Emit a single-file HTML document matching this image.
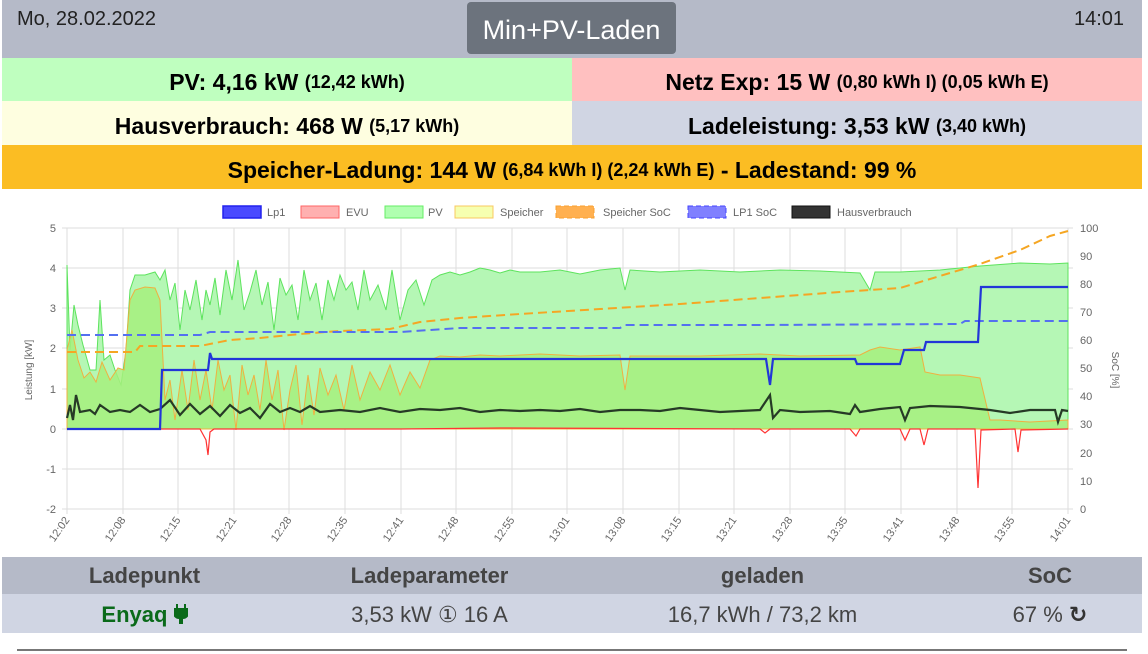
<!DOCTYPE html>
<html><head><meta charset="utf-8"><style>
*{margin:0;padding:0;box-sizing:border-box}
body{width:1148px;height:654px;background:#fff;font-family:"Liberation Sans","DejaVu Sans",sans-serif;position:relative;overflow:hidden}
.abs{position:absolute}
.hdr{left:2px;top:0;width:1140px;height:58px;background:#b5bac8}
.row{position:absolute;display:flex;align-items:center;justify-content:center;font-weight:bold;font-size:23px;color:#000;padding-top:6px}
.row small{font-size:18px}
</style></head><body>
<div class="abs hdr"></div>
<div class="abs" style="left:17px;top:8px;font-size:20px;color:#222">Mo, 28.02.2022</div>
<div class="abs" style="left:1074px;top:8px;font-size:20px;color:#222">14:01</div>
<div class="abs" style="left:467px;top:2px;width:209px;height:52px;background:#6c737d;border-radius:4px;color:#fff;font-size:27px;display:flex;align-items:center;justify-content:center;padding-top:4px">Min+PV-Laden</div>
<div class="row" style="left:2px;top:58px;width:570px;height:43px;background:#bfffbf">PV: 4,16 kW&nbsp;<small>(12,42 kWh)</small></div>
<div class="row" style="left:572px;top:58px;width:570px;height:43px;background:#ffc0c0">Netz Exp: 15 W&nbsp;<small>(0,80 kWh I) (0,05 kWh E)</small></div>
<div class="row" style="left:2px;top:101px;width:570px;height:44px;background:#fefee0">Hausverbrauch: 468 W&nbsp;<small>(5,17 kWh)</small></div>
<div class="row" style="left:572px;top:101px;width:570px;height:44px;background:#d0d5e3">Ladeleistung: 3,53 kW&nbsp;<small>(3,40 kWh)</small></div>
<div class="row" style="left:2px;top:145px;width:1140px;height:44px;background:#fbbd23">Speicher-Ladung: 144 W&nbsp;<small>(6,84 kWh I) (2,24 kWh E)</small>&nbsp;- Ladestand: 99 %</div>

<svg class="abs" style="left:0;top:189px" width="1148" height="366" viewBox="0 189 1148 366" font-family="Liberation Sans, sans-serif">
<g font-size="11" fill="#666">
<rect x="223" y="206" width="38" height="12" fill="#4a4aff" stroke="#22e" stroke-width="1.5"/><text x="267" y="216">Lp1</text>
<rect x="301" y="206" width="38" height="12" fill="#ffb0b0" stroke="#f66"/><text x="346" y="216">EVU</text>
<rect x="385" y="206" width="38" height="12" fill="#b0ffb0" stroke="#6e6"/><text x="428" y="216">PV</text>
<rect x="455" y="206" width="38" height="12" fill="#f6ffb0" stroke="#f8c860"/><text x="500" y="216">Speicher</text>
<rect x="556" y="206" width="38" height="12" fill="#ffb050" stroke="#f8a030" stroke-dasharray="5 3"/><text x="603" y="216">Speicher SoC</text>
<rect x="688" y="206" width="38" height="12" fill="#8080ff" stroke="#44f" stroke-dasharray="5 3"/><text x="733" y="216">LP1 SoC</text>
<rect x="792" y="206" width="38" height="12" fill="#333" stroke="#111"/><text x="837" y="216">Hausverbrauch</text>
</g>
<g stroke="#ddd" stroke-width="1">
<path d="M62 228H1073M62 268H1073M62 308H1073M62 348H1073M62 389H1073M62 429H1073M62 469H1073M62 509H1073"/>
<path d="M67 228V514M123 228V514M178 228V514M234 228V514M289 228V514M345 228V514M401 228V514M456 228V514M512 228V514M567 228V514M623 228V514M679 228V514M734 228V514M790 228V514M845 228V514M901 228V514M957 228V514M1012 228V514M1068 228V514"/>
</g>
<g font-size="11" fill="#666" text-anchor="end">
<text x="56" y="232">5</text><text x="56" y="272">4</text><text x="56" y="312">3</text><text x="56" y="352">2</text><text x="56" y="393">1</text><text x="56" y="433">0</text><text x="56" y="473">-1</text><text x="56" y="513">-2</text>
</g>
<g font-size="11" fill="#666">
<text x="1080" y="232">100</text><text x="1080" y="260">90</text><text x="1080" y="288">80</text><text x="1080" y="316">70</text><text x="1080" y="344">60</text><text x="1080" y="372">50</text><text x="1080" y="400">40</text><text x="1080" y="428">30</text><text x="1080" y="457">20</text><text x="1080" y="485">10</text><text x="1080" y="513">0</text>
</g>
<text font-size="10" fill="#666" transform="translate(32 370) rotate(-90)" text-anchor="middle">Leistung [kW]</text>
<text font-size="10" fill="#666" transform="translate(1112 370) rotate(90)" text-anchor="middle">SoC [%]</text>
<g font-size="11" fill="#666" text-anchor="end">
<text transform="translate(70 520) rotate(-55)">12:02</text><text transform="translate(126 520) rotate(-55)">12:08</text><text transform="translate(181 520) rotate(-55)">12:15</text><text transform="translate(237 520) rotate(-55)">12:21</text><text transform="translate(292 520) rotate(-55)">12:28</text><text transform="translate(348 520) rotate(-55)">12:35</text><text transform="translate(404 520) rotate(-55)">12:41</text><text transform="translate(459 520) rotate(-55)">12:48</text><text transform="translate(515 520) rotate(-55)">12:55</text><text transform="translate(570 520) rotate(-55)">13:01</text><text transform="translate(626 520) rotate(-55)">13:08</text><text transform="translate(682 520) rotate(-55)">13:15</text><text transform="translate(737 520) rotate(-55)">13:21</text><text transform="translate(793 520) rotate(-55)">13:28</text><text transform="translate(848 520) rotate(-55)">13:35</text><text transform="translate(904 520) rotate(-55)">13:41</text><text transform="translate(960 520) rotate(-55)">13:48</text><text transform="translate(1015 520) rotate(-55)">13:55</text><text transform="translate(1071 520) rotate(-55)">14:01</text>
</g>
<path d="M67 429V265L70 350L74 305L78 325L83 345L90 370L96 370L100 300L104 360L110 355L115 370L121 385L126 350L130 290L135 275L145 275L155 272L160 280L165 270L170 300L175 283L180 330L185 290L190 310L196 280L202 320L206 290L210 305L215 278L220 315L226 270L232 300L238 260L244 310L250 292L256 270L262 305L268 282L274 330L280 278L286 295L292 285L298 320L304 270L310 300L316 283L322 320L328 280L334 300L340 275L346 290L352 282L358 310L364 270L370 300L378 285L386 310L392 270L400 320L408 290L416 280L424 305L432 280L440 275L450 272L460 275L470 272L480 268L490 270L500 273L510 270L520 272L540 272L560 270L580 274L600 270L620 268L625 290L630 270L660 272L700 270L740 272L780 270L820 271L860 273L870 290L875 272L900 272L940 270L980 266L1020 263L1050 264L1068 263V429Z" fill="#b5f7b5" stroke="#5de35d" stroke-width="1"/>
<path d="M67 429V350L72 330L78 360L84 378L90 372L96 382L102 362L110 380L118 368L124 370L130 300L135 290L145 287L155 288L160 300L165 400L170 380L175 420L182 370L188 410L194 360L200 400L206 370L212 410L218 360L224 390L230 375L236 430L242 365L248 395L254 375L260 410L266 360L272 400L278 370L284 430L290 390L296 365L302 425L308 375L314 415L320 368L328 395L336 375L344 410L352 365L360 400L370 372L380 390L390 365L400 395L410 372L420 388L430 360L440 356L460 357L480 355L500 356L540 354L580 356L620 355L625 390L630 356L700 356L760 354L800 356L860 355L870 350L880 347L900 350L920 347L925 372L940 375L960 375L980 378L990 420L1000 420L1030 422L1068 420V429Z" fill="#a6f07e" fill-opacity="0.85" stroke="#f0b040" stroke-width="1"/>
<path d="M67 352L135 352L140 346L200 346L230 340L260 338L300 334L340 331L390 329L420 322L460 318L520 314L600 309L680 304L760 298L840 292L900 288L940 276L980 264L1020 250L1050 236L1068 231" fill="none" stroke="#f5a623" stroke-width="2" stroke-dasharray="9 5"/>
<path d="M67 335L200 335L210 332L400 332L460 328L620 328L625 325L760 325L960 324L965 321L1068 321" fill="none" stroke="#5470f0" stroke-width="2" stroke-dasharray="9 5"/>
<path d="M67 429L200 429L206 440L208 455L210 432L214 429L400 429L500 428L760 429L765 433L770 429L850 429L856 436L860 429L900 429L905 440L910 429L920 429L924 445L928 429L975 429L978 488L981 430L1015 429L1018 452L1021 430L1068 429" fill="none" stroke="#f33" stroke-width="1.2"/>
<path d="M67 418L70 405L73 420L76 395L80 412L90 410L95 414L100 405L110 412L120 410L130 412L140 405L150 412L160 409L170 400L180 415L190 404L200 414L210 406L220 416L230 405L240 413L250 408L260 418L270 404L280 412L290 408L300 412L310 406L320 412L340 410L360 412L380 408L400 412L420 409L440 410L460 408L480 412L500 410L520 411L540 410L560 411L580 409L600 412L620 410L640 410L660 411L680 408L700 410L720 412L740 411L760 410L770 395L773 418L780 410L800 412L830 411L850 414L855 405L860 412L880 409L900 407L905 420L910 408L930 406L960 407L990 410L1010 413L1030 410L1055 410L1058 422L1062 410L1068 411" fill="none" stroke="#263a26" stroke-width="2.2"/>
<path d="M67 429L160 429L162 370L208 370L210 353L212 359L766 359L770 385L773 359L855 359L857 364L900 364L904 350L924 350L926 342L978 342L981 287L1068 287" fill="none" stroke="#2236d8" stroke-width="2.2"/>
</svg>

<div class="abs" style="left:2px;top:557px;width:1140px;height:37px;background:#b5bac8"></div>
<div class="abs" style="left:2px;top:594px;width:1140px;height:39px;background:#d0d5e3"></div>
<div class="abs" style="left:2px;top:563px;width:285px;text-align:center;font-size:22px;font-weight:bold;color:#444">Ladepunkt</div>
<div class="abs" style="left:287px;top:563px;width:285px;text-align:center;font-size:22px;font-weight:bold;color:#444">Ladeparameter</div>
<div class="abs" style="left:620px;top:563px;width:285px;text-align:center;font-size:22px;font-weight:bold;color:#444">geladen</div>
<div class="abs" style="left:960px;top:563px;width:180px;text-align:center;font-size:22px;font-weight:bold;color:#444">SoC</div>
<div class="abs" style="left:2px;top:602px;width:285px;text-align:center;font-size:22px;font-weight:bold;color:#0a6a1a">Enyaq <svg width="14" height="20" viewBox="0 0 14 20" style="vertical-align:-2px"><path d="M3 0v5M11 0v5M0 5h14v4a5 5 0 0 1-5 5h-1v6h-2v-6h-1a5 5 0 0 1-5-5z" fill="#0a6a1a" stroke="#0a6a1a" stroke-width="2"/></svg></div>
<div class="abs" style="left:287px;top:602px;width:285px;text-align:center;font-size:22px;color:#444">3,53 kW ① 16 A</div>
<div class="abs" style="left:620px;top:602px;width:285px;text-align:center;font-size:22px;color:#444">16,7 kWh / 73,2 km</div>
<div class="abs" style="left:960px;top:602px;width:180px;text-align:center;font-size:22px;color:#444">67 % <b style="font-size:22px;color:#333">↻</b></div>
<div class="abs" style="left:17px;top:649px;width:1110px;height:2px;background:#777"></div>
</body></html>
